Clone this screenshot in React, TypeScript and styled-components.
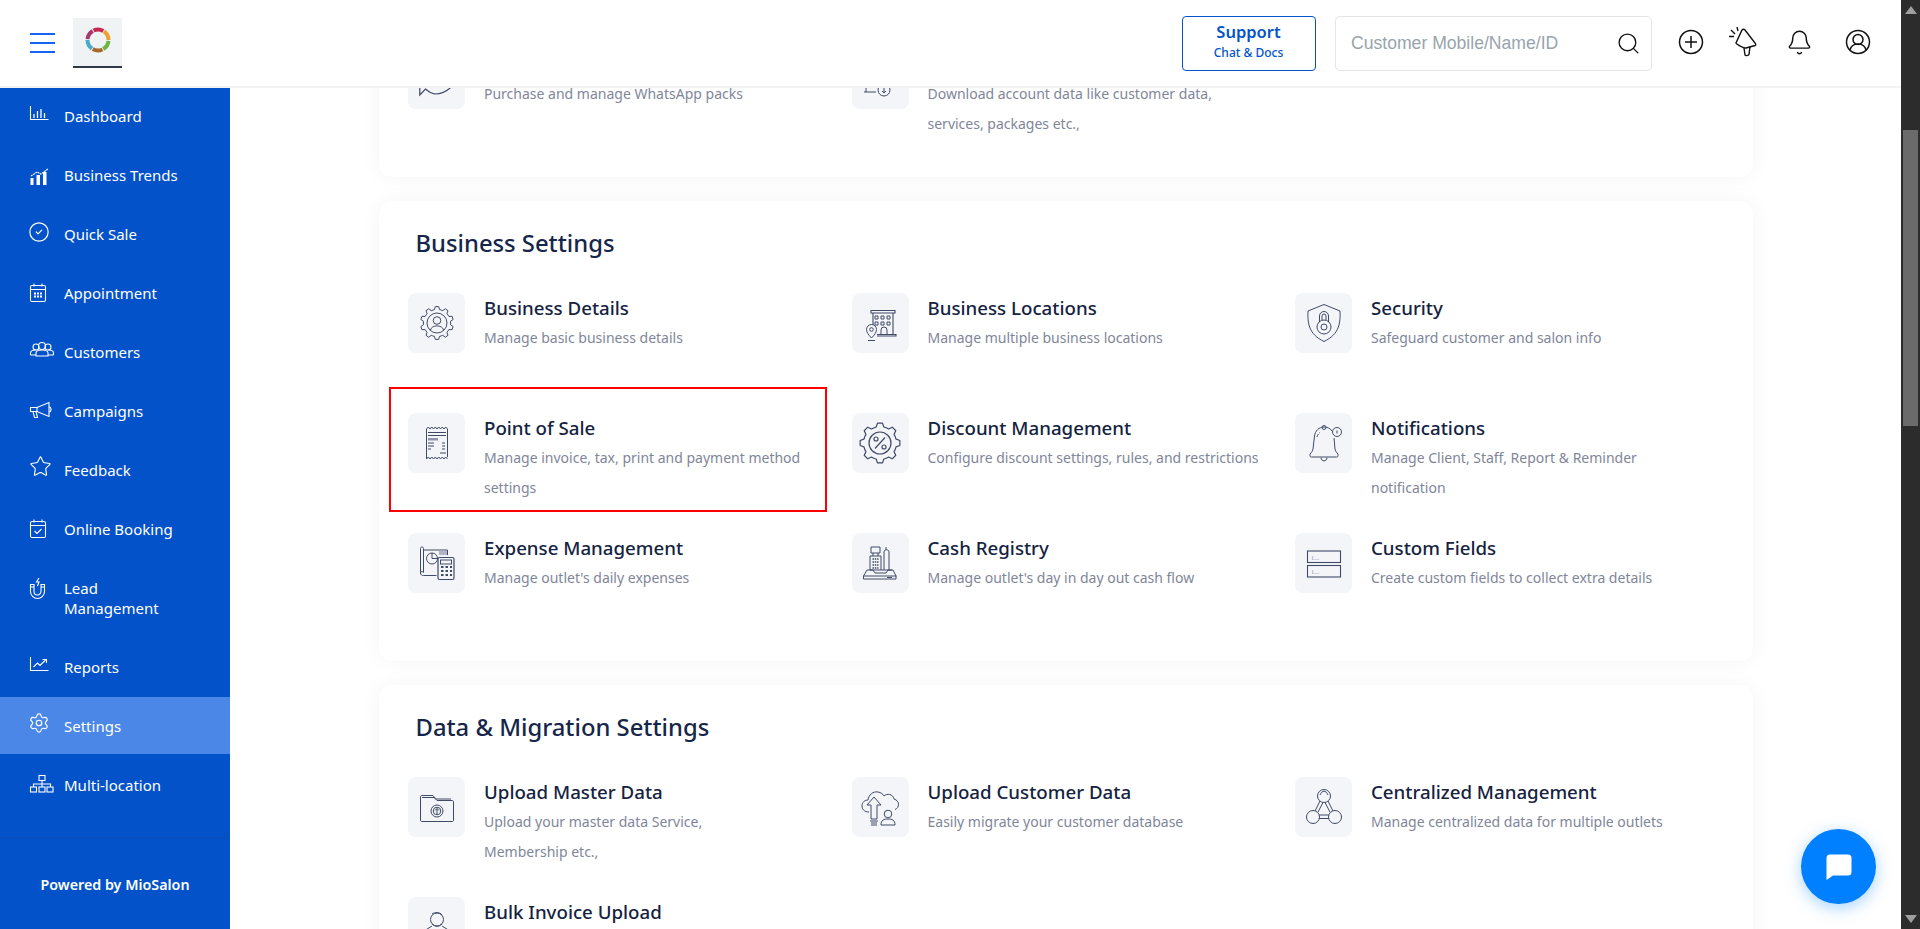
import React from "react";
import styled, { createGlobalStyle } from "styled-components";
import { CircleCheck, Star, Settings, Search, Bell } from "lucide-react";

const Global = createGlobalStyle`
  html, body { margin: 0; padding: 0; height: 100%; background: #fff; overflow: hidden; }
  body { font-family: "Noto Sans", "Liberation Sans", sans-serif; }
  *, *::before, *::after { box-sizing: border-box; }
`;

const Shell = styled.div`
  position: relative;
  display: flex;
  height: 100vh;
  overflow: hidden;
`;
const Page = styled.div`
  flex: 1;
  min-width: 0;
  display: flex;
  flex-direction: column;
`;
const TopBar = styled.header`
  height: 88px;
  flex: none;
  display: flex;
  align-items: center;
  padding-left: 30px;
  background: #fff;
  border-bottom: 2px solid #f3f3f3;
`;
const Burger = styled.div`
  width: 25px;
  height: 20px;
  margin-right: 18px;
  display: flex;
  flex-direction: column;
  justify-content: space-between;
  span { display: block; height: 2px; background: #1565f5; }
`;
const LogoTile = styled.div`
  width: 49px;
  height: 50px;
  margin-top: -1px;
  display: flex;
  align-items: center;
  justify-content: center;
  padding-bottom: 4px;
  background: #f0f3f4;
  border-bottom: 2px solid #2f3a44;
`;
const Spacer = styled.div`
  flex: 1;
`;
const SupportButton = styled.div`
  width: 134px;
  height: 55px;
  display: flex;
  flex-direction: column;
  align-items: center;
  justify-content: center;
  border: 1px solid #0353cc;
  border-radius: 4px;
  color: #0353cc;
`;
const SupportTitle = styled.div`
  font-size: 16.5px;
  line-height: 22px;
  font-weight: 600;
  margin-top: -2px;
`;
const SupportSub = styled.div`
  font-size: 12px;
  line-height: 20px;
  font-weight: 500;
`;
const SearchBox = styled.div`
  width: 317px;
  height: 55px;
  margin-left: 19.5px;
  padding: 0 10px 0 15px;
  display: flex;
  align-items: center;
  justify-content: space-between;
  border: 1px solid #e4e4e4;
  border-radius: 5px;
  color: #111;
`;
const Placeholder = styled.span`
  font-family: "Liberation Sans", Arial, sans-serif;
  font-size: 17.6px;
  color: #98a4ac;
`;
const TopIcons = styled.div`
  display: flex;
  align-items: center;
  margin-left: 25.5px;
  margin-right: 30px;
  color: #111;
`;
const TopIcon = styled.span<{ $gap?: number }>`
  display: block;
  margin-left: ${(p) => p.$gap ?? 0}px;
  margin-top: -2px;
  svg { display: block; }
`;
const Body = styled.div`
  flex: 1;
  min-height: 0;
  display: flex;
`;
const SideBar = styled.aside`
  width: 230px;
  flex: none;
  display: flex;
  flex-direction: column;
  background: #0352c9;
`;
const SideNav = styled.nav`
  flex: 1;
  display: flex;
  flex-direction: column;
  gap: 2px;
  margin-top: -1px;
`;
const SideItem = styled.div<{ $active?: boolean }>`
  display: flex;
  align-items: flex-start;
  padding: 18.5px 0 18.5px 30px;
  color: #fff;
  font-size: 15px;
  line-height: 20px;
  background: ${(p) => (p.$active ? "#4a87e6" : "transparent")};
`;
const SideIcon = styled.span`
  width: 34px;
  height: 20px;
  flex: none;
  display: block;
  svg { display: block; overflow: visible; }
`;
const SideFooter = styled.div`
  height: 92px;
  flex: none;
  display: flex;
  align-items: center;
  justify-content: center;
  padding: 2px 0 0 0;
  border-top: 1px solid #0a4dba;
  color: #fff;
  font-size: 14.3px;
  font-weight: 600;
`;
const Main = styled.main`
  flex: 1;
  min-width: 0;
  overflow: hidden;
  padding: 0 148px 0 149px;
`;
const Scrolled = styled.div`
  margin-top: -131px;
  display: flex;
  flex-direction: column;
  gap: 24px;
`;
const Card = styled.section`
  padding: 24px 0 38px 29px;
  background: #fff;
  border-radius: 14px;
  box-shadow: 0 0 22px rgba(30, 40, 80, 0.045);
`;
const CardTitle = styled.h2`
  margin: 0 0 32px 7.5px;
  height: 36px;
  font-size: 23.8px;
  line-height: 36px;
  font-weight: 500;
  color: #16264a;
`;
const Grid = styled.div`
  display: grid;
  grid-template-columns: repeat(3, 443.5px);
  grid-auto-rows: 90px;
  row-gap: 30px;
`;
const Item = styled.div<{ $marked?: boolean }>`
  position: relative;
  display: flex;
  height: 90px;
  ${(p) =>
    p.$marked
      ? `&::after {
           content: "";
           position: absolute;
           left: -19px;
           top: -26px;
           width: 438px;
           height: 125px;
           border: 2.5px solid #f00;
           pointer-events: none;
         }`
      : ""}
`;
const IconBox = styled.div`
  width: 57px;
  height: 60px;
  flex: none;
  display: flex;
  align-items: center;
  justify-content: center;
  margin-right: 19px;
  border-radius: 8px;
  background: #f4f5f8;
  svg {
    display: block;
    fill: none;
    stroke: #3f4a66;
    stroke-width: 1;
  }
`;
const ItemTitle = styled.div`
  height: 30px;
  font-size: 18.7px;
  line-height: 30px;
  font-weight: 500;
  color: #15233f;
  white-space: nowrap;
`;
const ItemDesc = styled.div`
  font-size: 14px;
  line-height: 30px;
  color: #7f8699;
  white-space: nowrap;
`;
const FakeScrollbar = styled.div`
  position: relative;
  width: 19px;
  flex: none;
  background: #2c2c2c;
`;
const ScrollThumb = styled.div`
  position: absolute;
  left: 2px;
  right: 2px;
  top: 130px;
  height: 296px;
  background: #6b6b6b;
`;
const ScrollArrow = styled.div<{ $down?: boolean }>`
  position: absolute;
  left: 4px;
  width: 0;
  height: 0;
  border-left: 6px solid transparent;
  border-right: 6px solid transparent;
  ${(p) =>
    p.$down
      ? "bottom: 6px; border-top: 8px solid #9f9f9f;"
      : "top: 6px; border-bottom: 8px solid #9f9f9f;"}
`;
const ChatFab = styled.div`
  position: absolute;
  left: 1801px;
  top: 829px;
  width: 75px;
  height: 75px;
  display: flex;
  align-items: center;
  justify-content: center;
  border-radius: 50%;
  background: #0080ff;
  box-shadow: 0 4px 16px rgba(0, 128, 255, 0.35);
`;

/* ---- drawing helpers ---- */
const gear = (cx: number, cy: number, teeth: number, R: number, r: number) => {
  const step = (Math.PI * 2) / teeth;
  let d = "";
  for (let i = 0; i < teeth; i++) {
    const a = i * step - Math.PI / 2;
    const pts: [number, number][] = [
      [r, a - step * 0.3],
      [R, a - step * 0.16],
      [R, a + step * 0.16],
      [r, a + step * 0.3],
    ];
    pts.forEach(([rad, t], j) => {
      const x = (cx + rad * Math.cos(t)).toFixed(2);
      const y = (cy + rad * Math.sin(t)).toFixed(2);
      d += `${i === 0 && j === 0 ? "M" : j === 0 ? `A${r} ${r} 0 0 1 ` : "L"}${x} ${y} `;
    });
  }
  return d + "Z";
};
const zig = (x0: number, x1: number, y: number, n: number, h: number) => {
  let d = `M${x0} ${y}`;
  const s = (x1 - x0) / n;
  for (let i = 1; i <= n; i++) d += `L${x0 + s * i} ${y + (i % 2 ? -h : 0)}`;
  return d;
};

const Sv = ({ children }: { children: React.ReactNode }) => (
  <svg width="40" height="40" viewBox="0 0 40 40">{children}</svg>
);

const Ic = {
  chat: (
    <Sv>
      <path d="M2.800 27v9l5.700-6c3.500 3 7.500 5 10 5 6.500 0 11.500-3 15.700-7" strokeWidth="1.200" />
      <path d="M4 20c0-8 7-15 16-15s16 7 16 15" />
    </Sv>
  ),
  dataDl: (
    <Sv>
      <path d="M6 6h22v22" />
      <path d="M4 33h12M6 24v9" />
      <circle cx="24" cy="31" r="6" />
      <path d="M24 28v6m-2-2 2 2 2-2" />
    </Sv>
  ),
  details: (
    <Sv>
      <path d={gear(20, 20, 10, 16.5, 13.6)} />
      <circle cx="20" cy="20" r="10" />
      <circle cx="20" cy="17.5" r="3.8" />
      <path d="M13.5 27c1-5.5 12-5.5 13 0" />
    </Sv>
  ),
  location: (
    <Sv>
      <path d="M11 7.500h24v2.500H11zM13 10v22M33 10v22M17 33h19v-1.500H17" strokeWidth="1.100" />
      <path d="M15 13h3v3h-3zM21 13h3v3h-3zM27 13h3v3h-3zM15 19h3v3h-3zM21 19h3v3h-3zM27 19h3v3h-3z" />
      <path d="M21 32v-5a3 3 0 0 1 6 0v5" />
      <path d="M11.500 35c-3-3-5-6-5-8.500a5 5 0 0 1 10 0c0 2.500-2 5.500-5 8.500z" fill="#f4f5f8" />
      <circle cx="11.500" cy="26.500" r="1.800" />
      <path d="M8 37.500h7" />
    </Sv>
  ),
  security: (
    <Sv>
      <path d="M20 1.500l16 6.500c.5 12 -.5 23 -16 30.500C4.500 31 3.500 20 4 8z" />
      <path d="M15.500 19v-6a4.500 4.500 0 0 1 9 0v6M18 17v-4a2 2 0 0 1 4 0v4" />
      <circle cx="20" cy="24" r="7" />
      <circle cx="20" cy="24" r="3" />
    </Sv>
  ),
  pos: (
    <Sv>
      <path d={zig(9.5, 30.5, 6, 12, 2) + "V34"} />
      <path d={zig(9.5, 30.5, 36, 12, 2) + "M9.500 6V36"} />
      <path d="M11 9.500h18M11 12.500h18" strokeWidth="1.200" />
      <path d="M11 15h10v2.500H11z" fill="#8e95a8" stroke="none" />
      <path d="M11 20h6M11 23h6M11 26h3M25 20h3M25 23h3M25 26h3M23 30h6" strokeWidth="1.200" />
    </Sv>
  ),
  discount: (
    <svg width="44" height="44" viewBox="0 0 44 44" style={{ strokeWidth: 1.2 }}>
      <path d={gear(22, 22, 8, 20, 16.5)} strokeLinejoin="round" />
      <circle cx="22" cy="22" r="11" />
      <circle cx="18" cy="18" r="2" />
      <circle cx="26" cy="26" r="2" />
      <path d="M27 16.500 17 27.500" />
    </svg>
  ),
  bell: (
    <Sv>
      <circle cx="33" cy="9" r="4.500" />
      <path d="M33 7.500v3" />
      <circle cx="20" cy="4.500" r="2" />
      <path d="M28 8c-2-3-5-4-8-4-5 0-9 4-9.500 9L9 26c-.5 3-2 3.500-3 5v1.500c0 1 .5 1.500 1.500 1.500h25c1 0 1.500-.5 1.500-1.500V31c-1-1.500-2.500-2-3-5l-1-11" />
      <path d="M17 34.500c0 4.500 6 4.500 6 0" />
      <path d="M13 14c.5-2 1.500-3.500 3-4.500" strokeDasharray="3 1.500" />
    </Sv>
  ),
  expense: (
    <Sv>
      <path d="M3.500 5.500c0-2 3-2 3 0v24c-1.500-1.500-3-1-3 .5v-24.500zM6.500 7h24v5M3.500 30c0 2 1.500 2.500 3 2.500h13" />
      <circle cx="15" cy="15.500" r="5.500" />
      <path d="M15 10v5.500h6" />
      <path d="M22 9h8M22 11h8" strokeWidth="1.500" stroke="#9aa0b2" />
      <rect x="21" y="14.500" width="16" height="22" rx="1.500" strokeWidth="1.200" />
      <rect x="23.500" y="17" width="11" height="4" />
      <path d="M24 24h2.500M28.500 24H31M33 24h2M24 28h2.500M28.500 28H31M33 28h2M24 32h2.500M28.500 32H31M33 32h2" strokeWidth="2.200" />
    </Sv>
  ),
  cash: (
    <Sv>
      <path d="M11 4h9v6h-9zM13 10v3M18 10v3M10 13h11v14H10z" />
      <path d="M12.500 16h6M12.500 19h6M12.500 22h6M12.500 25h6" strokeWidth="1.400" strokeDasharray="1.500 .8" />
      <path d="M24 27V9c0-3 5-3 5 0v18M21 27h11" />
      <path d="M26 4v3" />
      <path d="M7 27h6l2 3h11l2-3h5l3 6v3H3.500v-3z" />
      <path d="M3.500 33h33M27 34.500h5" />
    </Sv>
  ),
  custom: (
    <Sv>
      <rect x="3.500" y="8" width="33" height="11.500" strokeWidth="1.100" />
      <rect x="3.500" y="22.500" width="33" height="11.500" strokeWidth="1.100" />
      <text x="7" y="16.500" fontFamily="Liberation Serif, serif" fontSize="6.500" fill="#8b93a8" stroke="none">1...</text>
      <text x="7" y="31" fontFamily="Liberation Serif, serif" fontSize="6.500" fill="#8b93a8" stroke="none">1...</text>
    </Sv>
  ),
  folder: (
    <Sv>
      <path d="M3.500 33V10c0-1 .5-1.500 1.500-1.500h11l3 3.500h15" />
      <path d="M3.500 33c0 1 .5 1.500 1.500 1.500h30c1 0 1.500-.5 1.500-1.500V15c0-1-.5-1.500-1.500-1.500H20l-3-3H5" />
      <circle cx="20" cy="24" r="6" />
      <circle cx="20" cy="24" r="3.800" />
      <path d="M20 27v-5.500m-2 2 2-2 2 2" />
    </Sv>
  ),
  cloud: (
    <Sv>
      <path d="M9 25c-5 0-7-3-7-6 0-4 3-6 6-6 .5-5 5-9 10-8 3 .5 5 2 6 4 3-3 9-2 10 3 3 1 4.500 3 4.500 5.500 0 2-1 4-3.500 5" />
      <path d="M14 10l-7 8h4v14h6V18h4z" fill="#f4f5f8" />
      <path d="M10 34h8M11 36h6M11 38h6" />
      <circle cx="28" cy="27" r="3.800" />
      <path d="M21 38c0-5 3-6 7-6s7 1 7 6z" />
    </Sv>
  ),
  central: (
    <Sv>
      <circle cx="20" cy="9" r="6.500" />
      <circle cx="9" cy="30" r="6.500" />
      <circle cx="31" cy="30" r="6.500" />
      <path d="M16 14l-5 10M19 15.500 14 25M24 14l5 10M21 15.500 26 25M15 28h10M15 31.500h10" />
      <path d="M16 8c2-5 6-5 8 0" />
    </Sv>
  ),
  bulk: (
    <Sv>
      <circle cx="20" cy="12.500" r="6.500" />
      <path d="M15 7c3-2 8-2 10 1M15 19l-8 5M25 19l8 5M15 17c3 3 7 3 10 0" />
    </Sv>
  ),
};

type Entry = { icon: React.ReactNode; title: string; lines: string[]; marked?: boolean };

const firstRow: Entry[] = [
  { icon: Ic.chat, title: "", lines: ["Purchase and manage WhatsApp packs"] },
  { icon: Ic.dataDl, title: "", lines: ["Download account data like customer data,", "services, packages etc.,"] },
];
const business: Entry[] = [
  { icon: Ic.details, title: "Business Details", lines: ["Manage basic business details"] },
  { icon: Ic.location, title: "Business Locations", lines: ["Manage multiple business locations"] },
  { icon: Ic.security, title: "Security", lines: ["Safeguard customer and salon info"] },
  { icon: Ic.pos, title: "Point of Sale", lines: ["Manage invoice, tax, print and payment method", "settings"], marked: true },
  { icon: Ic.discount, title: "Discount Management", lines: ["Configure discount settings, rules, and restrictions"] },
  { icon: Ic.bell, title: "Notifications", lines: ["Manage Client, Staff, Report & Reminder", "notification"] },
  { icon: Ic.expense, title: "Expense Management", lines: ["Manage outlet's daily expenses"] },
  { icon: Ic.cash, title: "Cash Registry", lines: ["Manage outlet's day in day out cash flow"] },
  { icon: Ic.custom, title: "Custom Fields", lines: ["Create custom fields to collect extra details"] },
];
const migration: Entry[] = [
  { icon: Ic.folder, title: "Upload Master Data", lines: ["Upload your master data Service,", "Membership etc.,"] },
  { icon: Ic.cloud, title: "Upload Customer Data", lines: ["Easily migrate your customer database"] },
  { icon: Ic.central, title: "Centralized Management", lines: ["Manage centralized data for multiple outlets"] },
  { icon: Ic.bulk, title: "Bulk Invoice Upload", lines: [] },
];

const Row = ({ e }: { e: Entry }) => (
  <Item $marked={e.marked}>
    <IconBox>{e.icon}</IconBox>
    <div>
      <ItemTitle>{e.title}</ItemTitle>
      {e.lines.map((l) => (
        <ItemDesc key={l}>{l}</ItemDesc>
      ))}
    </div>
  </Item>
);

const W = (p: { w?: number; h?: number; children: React.ReactNode }) => (
  <svg width={p.w ?? 20} height={p.h ?? 20} viewBox={`0 0 ${p.w ?? 20} ${p.h ?? 20}`} fill="none" stroke="#fff" strokeWidth="1.100">
    {p.children}
  </svg>
);

const nav: { label: React.ReactNode; icon: React.ReactNode; active?: boolean }[] = [
  {
    label: "Dashboard",
    icon: (
      <W>
        <path d="M.5 0v13.500h18" />
        <path d="M4 12V8M7.500 12V5M11 12V3M14.500 12V7" strokeWidth="1.300" />
      </W>
    ),
  },
  {
    label: "Business Trends",
    icon: (
      <W>
        <path d="M1 11l6-4 4 2 7-5" strokeDasharray="2 .6" />
        <path d="M.5 13h3v7h-3zM6.500 10h3.500v10h-3.500zM13 7h3.500v13H13z" fill="#fff" stroke="none" />
      </W>
    ),
  },
  {
    label: "Quick Sale",
    icon: <CircleCheck size={22} strokeWidth={1.3} color="#fff" style={{ marginLeft: -2, marginTop: -2.5 }} />,
  },
  {
    label: "Appointment",
    icon: (
      <W>
        <rect x=".5" y="2.500" width="15" height="16" rx="1.500" />
        <path d="M.5 6.500h15M4 .5v3M12 .5v3" />
        <path d="M4 9.500h2v2H4zM7 9.500h2v2H7zM10 9.500h2v2h-2zM4 12.500h2v2H4zM7 12.500h2v2H7zM10 12.500h2v2h-2z" fill="#fff" stroke="none" />
      </W>
    ),
  },
  {
    label: "Customers",
    icon: (
      <W w={24}>
        <circle cx="6" cy="5" r="3" />
        <circle cx="12" cy="4" r="3.500" />
        <circle cx="18" cy="5" r="3" />
        <path d="M.5 13V11c0-2 2-3 5-3M23.500 13V11c0-2-2-3-5-3M.5 13h5M18 13h5.500M6 14v-3c0-2 3-3 6-3s6 1 6 3v3z" />
      </W>
    ),
  },
  {
    label: "Campaigns",
    icon: (
      <W w={22}>
        <path d="M.5 6.500h6.500l12-5v14l-12-5H.5z" />
        <path d="M19 6c1.500 0 2 1 2 2.500S20.500 11 19 11M3 10.500l1.500 6h3l-1.500-6M7 6.500v4" />
      </W>
    ),
  },
  {
    label: "Feedback",
    icon: <Star size={23} strokeWidth={1.2} color="#fff" style={{ marginLeft: -1.5, marginTop: -4.5 }} />,
  },
  {
    label: "Online Booking",
    icon: (
      <W>
        <rect x=".5" y="2.500" width="15" height="16" rx="1.500" />
        <path d="M.5 6.500h15M4 .5v3M12 .5v3M4.500 12l2.500 2.500 4.500-4.500" />
      </W>
    ),
  },
  {
    label: (
      <>
        Lead
        <br />
        Management
      </>
    ),
    icon: (
      <W>
        <path d="M.5 6.500v7a7 7 0 0 0 14 0v-7h-3.500v7a3.500 3.500 0 0 1-7 0v-7zM.5 9h3.500M11 9h3.500" />
        <path d="M9 0 6.500 4H9l-1.500 4" />
      </W>
    ),
  },
  {
    label: "Reports",
    icon: (
      <W>
        <path d="M.5 0v13.500h18" />
        <path d="M3.500 10l4-4 2.500 2.500L15.500 3M12.500 2.500h4V6" />
      </W>
    ),
  },
  {
    label: "Settings",
    active: true,
    icon: <Settings size={22} strokeWidth={1.3} color="#fff" style={{ marginLeft: -2, marginTop: -4 }} />,
  },
  {
    label: "Multi-location",
    icon: (
      <W w={24}>
        <rect x="9" y=".5" width="6" height="5" />
        <rect x=".5" y="12" width="6" height="5" />
        <rect x="9" y="12" width="6" height="5" />
        <rect x="17" y="12" width="6" height="5" />
        <path d="M12 5.500V12M3.500 12V9h17v3" />
      </W>
    ),
  },
];

const RING = ["#c9264f", "#f0a030", "#6fb544", "#a9682c", "#4aa8c9", "#a8386f"];
const LogoRing = () => (
  <svg width="26" height="26" viewBox="0 0 26 26" fill="none" strokeWidth="4">
    {RING.map((c, i) => {
      const a0 = (i * 60 - 115) * (Math.PI / 180);
      const a1 = ((i + 1) * 60 - 120) * (Math.PI / 180);
      const p = (a: number) => `${(13 + 10.500 * Math.cos(a)).toFixed(2)} ${(13 + 10.500 * Math.sin(a)).toFixed(2)}`;
      return <path key={c} d={`M${p(a0)}A10.500 10.500 0 0 1 ${p(a1)}`} stroke={c} />;
    })}
  </svg>
);

export default function App() {
  return (
    <>
      <Global />
      <Shell>
        <Page>
          <TopBar>
            <Burger>
              <span />
              <span />
              <span />
            </Burger>
            <LogoTile>
              <LogoRing />
            </LogoTile>
            <Spacer />
            <SupportButton>
              <SupportTitle>Support</SupportTitle>
              <SupportSub>Chat &amp; Docs</SupportSub>
            </SupportButton>
            <SearchBox>
              <Placeholder>Customer Mobile/Name/ID</Placeholder>
              <Search size={25} strokeWidth={1.3} />
            </SearchBox>
            <TopIcons>
              <TopIcon>
                <svg width="26" height="26" viewBox="0 0 26 26" fill="none" stroke="#111" strokeWidth="1.500">
                  <circle cx="13" cy="13" r="11.500" />
                  <path d="M13 7v12M7 13h12" />
                </svg>
              </TopIcon>
              <TopIcon $gap={25}>
                <svg width="28" height="30" viewBox="0 0 28 30" fill="none" stroke="#111" strokeWidth="1.400">
                  <path d="M13 3c1-1 2-1 3 0l10 13c1 1 1 2 0 2.500L17 21c-2 .500-10-4-10-5z" />
                  <path d="M15 21l1 7c1 1 3 .500 4-.500l1-8" />
                  <path d="M2 3l4 4M0 9.500h5M8 0l1 4" />
                </svg>
              </TopIcon>
              <TopIcon $gap={29}>
                <Bell size={27} strokeWidth={1.3} />
              </TopIcon>
              <TopIcon $gap={32.5}>
                <svg width="26" height="26" viewBox="0 0 26 26" fill="none" stroke="#111" strokeWidth="1.500">
                  <circle cx="13" cy="13" r="11.500" />
                  <circle cx="13" cy="10.500" r="5" />
                  <path d="M5 21c1-4 4-6 8-6s7 2 8 6" />
                </svg>
              </TopIcon>
            </TopIcons>
          </TopBar>
          <Body>
            <SideBar>
              <SideNav>
                {nav.map((n, i) => (
                  <SideItem key={i} $active={n.active}>
                    <SideIcon>{n.icon}</SideIcon>
                    <span>{n.label}</span>
                  </SideItem>
                ))}
              </SideNav>
              <SideFooter>Powered by MioSalon</SideFooter>
            </SideBar>
            <Main>
              <Scrolled>
                <Card>
                  <CardTitle />
                  <Grid>
                    {firstRow.map((e, i) => (
                      <Row key={i} e={e} />
                    ))}
                  </Grid>
                </Card>
                <Card>
                  <CardTitle>Business Settings</CardTitle>
                  <Grid>
                    {business.map((e) => (
                      <Row key={e.title} e={e} />
                    ))}
                  </Grid>
                </Card>
                <Card>
                  <CardTitle>Data &amp; Migration Settings</CardTitle>
                  <Grid>
                    {migration.map((e) => (
                      <Row key={e.title} e={e} />
                    ))}
                  </Grid>
                </Card>
              </Scrolled>
            </Main>
          </Body>
        </Page>
        <FakeScrollbar>
          <ScrollArrow />
          <ScrollThumb />
          <ScrollArrow $down />
        </FakeScrollbar>
        <ChatFab>
          <svg width="28" height="28" viewBox="0 0 28 28">
            <path d="M5 1.500h18a3.500 3.500 0 0 1 3.500 3.500v14a3.500 3.500 0 0 1-3.500 3.500H8L1.500 27V5A3.500 3.500 0 0 1 5 1.500z" fill="#fff" />
          </svg>
        </ChatFab>
      </Shell>
    </>
  );
}
